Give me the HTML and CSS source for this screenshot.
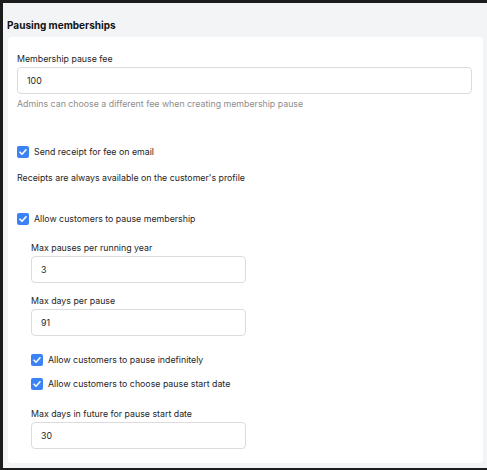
FILE: index.html
```html
<!DOCTYPE html>
<html lang="en">
<head>
	<meta charset="UTF-8">
	<title>Pausing memberships</title>
	<link rel="stylesheet" href="styles.css">
</head>
<body>
	<div class="panel">
		<h2 class="panel-title">Pausing memberships</h2>
		<div class="card">
			<label class="field-label">Membership pause fee</label>
			<div class="input wide">100</div>
			<p class="hint">Admins can choose a different fee when creating membership pause</p>

			<div class="check row-receipt">
				<span class="box"><svg viewBox="0 0 12 12"><path d="M3 6.2l2 2 4-4.4"/></svg></span>
				<span>Send receipt for fee on email</span>
			</div>
			<p class="note">Receipts are always available on the customer's profile</p>

			<div class="check row-allow">
				<span class="box"><svg viewBox="0 0 12 12"><path d="M3 6.2l2 2 4-4.4"/></svg></span>
				<span>Allow customers to pause membership</span>
			</div>

			<div class="sub">
				<label class="field-label">Max pauses per running year</label>
				<div class="input">3</div>

				<label class="field-label next">Max days per pause</label>
				<div class="input">91</div>

				<div class="check row-indef">
					<span class="box"><svg viewBox="0 0 12 12"><path d="M3 6.2l2 2 4-4.4"/></svg></span>
					<span>Allow customers to pause indefinitely</span>
				</div>
				<div class="check row-start">
					<span class="box"><svg viewBox="0 0 12 12"><path d="M3 6.2l2 2 4-4.4"/></svg></span>
					<span>Allow customers to choose pause start date</span>
				</div>

				<label class="field-label after-checks">Max days in future for pause start date</label>
				<div class="input">30</div>
			</div>
		</div>
	</div>
</body>
</html>
```
FILE: styles.css
```css
*{ margin: 0; padding: 0; box-sizing: border-box; }
body{ background: #1c1c1c; font-family: Inter, "Noto Sans", sans-serif; color: #262626; font-size: 8.8px; }

.panel{ margin: 3px 0 2px 3px; height: 465px; background: #f3f4f6; padding: 0 4px 0 5px; display: flex; flex-direction: column; }
.panel-title{ font-size: 10px; font-weight: 700; color: #111; line-height: 14px; padding-top: 15px; margin-left: -1px; height: 35px; }

.card{ background: #fff; border-radius: 4px; flex: 1; margin-bottom: 5px; padding: 16px 11px 14px 9px; display: flex; flex-direction: column; align-items: flex-start; }

.field-label{ display: block; line-height: 12px; margin-bottom: 2px; }
.field-label.next{ margin-top: 12px; }
.field-label.after-checks{ margin-top: 18px; }

.input{ width: 215px; height: 27px; border: 1px solid #dcdcdc; border-radius: 4px; padding-left: 9px; display: flex; align-items: center; }
.input.wide{ width: 100%; }

.hint{ color: #8e8e8e; line-height: 12px; margin-top: 4px; }
.note{ line-height: 12px; margin-top: 14px; }

.check{ display: flex; align-items: center; gap: 5px; height: 12px; line-height: 12px; }
.box{ width: 12px; height: 12px; border-radius: 2px; background: #3b82f6; display: flex; }
.box svg{ width: 12px; height: 12px; fill: none; stroke: #fff; stroke-width: 1.6; stroke-linecap: round; stroke-linejoin: round; }

.row-receipt{ margin-top: 36px; }
.row-allow{ margin-top: 29px; }

.sub{ padding-left: 14px; margin-top: 17px; display: flex; flex-direction: column; align-items: flex-start; }
.row-indef{ margin-top: 18px; }
.row-start{ margin-top: 12px; }
```
